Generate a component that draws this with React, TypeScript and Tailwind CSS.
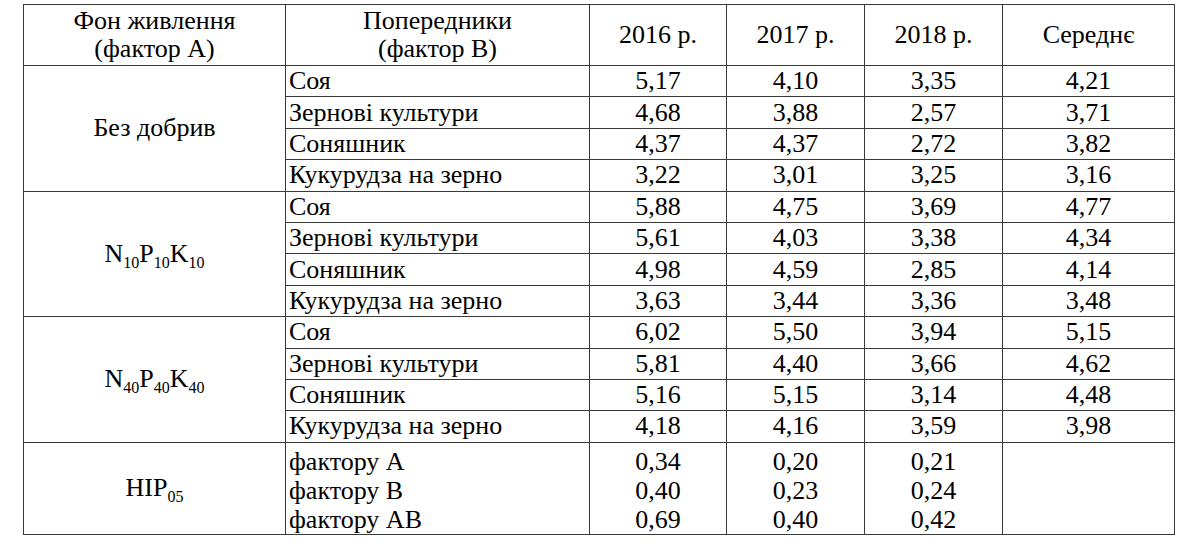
const groups = [
  {
    label: <>Без добрив</>,
    rows: [
      ["Соя", "5,17", "4,10", "3,35", "4,21"],
      ["Зернові культури", "4,68", "3,88", "2,57", "3,71"],
      ["Соняшник", "4,37", "4,37", "2,72", "3,82"],
      ["Кукурудза на зерно", "3,22", "3,01", "3,25", "3,16"],
    ],
  },
  {
    label: (
      <>
        N<sub className="text-[16px] align-[-2px]">10</sub>P
        <sub className="text-[16px] align-[-2px]">10</sub>K
        <sub className="text-[16px] align-[-2px]">10</sub>
      </>
    ),
    rows: [
      ["Соя", "5,88", "4,75", "3,69", "4,77"],
      ["Зернові культури", "5,61", "4,03", "3,38", "4,34"],
      ["Соняшник", "4,98", "4,59", "2,85", "4,14"],
      ["Кукурудза на зерно", "3,63", "3,44", "3,36", "3,48"],
    ],
  },
  {
    label: (
      <>
        N<sub className="text-[16px] align-[-2px]">40</sub>P
        <sub className="text-[16px] align-[-2px]">40</sub>K
        <sub className="text-[16px] align-[-2px]">40</sub>
      </>
    ),
    rows: [
      ["Соя", "6,02", "5,50", "3,94", "5,15"],
      ["Зернові культури", "5,81", "4,40", "3,66", "4,62"],
      ["Соняшник", "5,16", "5,15", "3,14", "4,48"],
      ["Кукурудза на зерно", "4,18", "4,16", "3,59", "3,98"],
    ],
  },
];

const hip = [
  ["фактору А", "0,34", "0,20", "0,21"],
  ["фактору В", "0,40", "0,23", "0,24"],
  ["фактору АВ", "0,69", "0,40", "0,42"],
];

// every cell draws its own right/bottom rule; the grid draws left/top
const cell = "flex items-center border-r border-b border-[#3a3a3a]";
const center = `${cell} justify-center text-center`;

export default function App() {
  return (
    <div className="min-h-[549px] bg-white pt-[4px] pl-[23px] font-['Liberation_Serif',serif] text-[26px] leading-[28px] text-black">
      <div className="grid w-[1152px] grid-cols-[262px_304px_137px_138px_138px_172px] grid-rows-[61px_repeat(12,31.4px)_92px] border-t border-l border-[#3a3a3a]">
        <div className={center}>
          Фон живлення
          <br />
          (фактор А)
        </div>
        <div className={center}>
          Попередники
          <br />
          (фактор В)
        </div>
        <div className={center}>2016 р.</div>
        <div className={center}>2017 р.</div>
        <div className={center}>2018 р.</div>
        <div className={center}>Середнє</div>

        {groups.map((g, gi) => [
          <div key={`l${gi}`} className={`${center} row-span-4`}>
            <span>{g.label}</span>
          </div>,
          ...g.rows.flatMap((r, ri) => [
            <div key={`${gi}-${ri}-n`} className={`${cell} pl-[3px]`}>
              {r[0]}
            </div>,
            ...r.slice(1).map((v, i) => (
              <div key={`${gi}-${ri}-${i}`} className={center}>
                {v}
              </div>
            )),
          ]),
        ])}

        <div className={center}>
          <span>
            НІР<sub className="text-[16px] align-[-2px]">05</sub>
          </span>
        </div>
        <div className={`${cell} flex-col items-start pl-[3px] pt-[4px] leading-[29px]`}>
          {hip.map((h) => (
            <div key={h[0]}>{h[0]}</div>
          ))}
        </div>
        {[1, 2, 3].map((c) => (
          <div key={c} className={`${cell} flex-col pt-[4px] leading-[29px]`}>
            {hip.map((h) => (
              <div key={h[0]}>{h[c]}</div>
            ))}
          </div>
        ))}
        <div className={cell} />
      </div>
    </div>
  );
}
